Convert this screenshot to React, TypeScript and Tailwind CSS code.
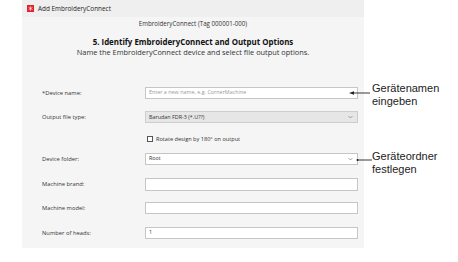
import React from 'react';

const ui = { fontFamily: '"Open Sans", "Noto Sans", sans-serif' };
const callout = { fontFamily: '"Liberation Sans", Arial, sans-serif' };

const Chevron: React.FC = () => (
  <svg width="5" height="4" viewBox="0 0 5 4" className="absolute right-[5px] top-1/2 -translate-y-1/2">
    <path d="M0.5 1 L2.5 3 L4.5 1" fill="none" stroke="#8a8a8a" strokeWidth="0.8" />
  </svg>
);

interface RowProps {
  label: string;
  className: string;
  children: React.ReactNode;
}

const Row: React.FC<RowProps> = ({ label, className, children }) => (
  <div className={`flex items-center ${className}`}>
    <div className="w-[103px] shrink-0 text-[5.8px] text-[#333]">{label}</div>
    <div className="relative w-[213px] h-full">{children}</div>
  </div>
);

const TextBox: React.FC<{ value?: string; placeholder?: string }> = ({ value, placeholder }) => (
  <div className="h-full w-full border border-[#c6c6c6] bg-white flex items-center pl-[3px] text-[5.4px] leading-none">
    {value ? <span className="text-[#333]">{value}</span> : <span className="text-[#9a9a9a]">{placeholder}</span>}
  </div>
);

const App: React.FC = () => {
  return (
    <div className="relative w-[458px] h-[262px] bg-white overflow-hidden" style={ui}>
      <div className="ml-[22px] w-[342px] h-[248px] bg-[#f5f5f5]">
        {/* title bar */}
        <div className="h-[17px] bg-[#efefef] flex items-center pl-[5px] gap-[4px]">
          <svg width="7" height="7" viewBox="0 0 7 7">
            <rect width="7" height="7" fill="#e0202e" />
            <path d="M3.5 1.2 V5.8 M1.5 2.3 L5.5 4.7 M1.5 4.7 L5.5 2.3" stroke="#fff" strokeWidth="0.6" />
          </svg>
          <span className="text-[6.4px] text-[#222]">Add EmbroideryConnect</span>
        </div>

        <div className="text-center mt-[2px] text-[6.2px] leading-[10px] text-[#333]">
          EmbroideryConnect (Tag 000001-000)
        </div>
        <div className="text-center mt-[8px] text-[7.9px] leading-[10px] font-bold text-[#111]">
          5. Identify EmbroideryConnect and Output Options
        </div>
        <div className="text-center text-[7.4px] leading-[10px] text-[#333]">
          Name the EmbroideryConnect device and select file output options.
        </div>

        <div className="mt-[30px] pl-[20px]">
          <Row label="*Device name:" className="h-[12px]">
            <TextBox placeholder="Enter a new name, e.g. CornerMachine" />
          </Row>
          <Row label="Output file type:" className="h-[12px] mt-[12px]">
            <div className="h-full w-full border border-[#cdcdcd] bg-[#e6e6e6] flex items-center pl-[3px] text-[5.4px] text-[#333]">
              Barudan FDR-3 (*.U??)
            </div>
            <Chevron />
          </Row>
          <Row label="" className="h-[12px] mt-[10px]">
            <div className="flex items-center h-full pl-[2px] gap-[3px]">
              <div className="w-[6px] h-[6px] border border-[#555] bg-white" />
              <span className="text-[5.6px] text-[#333]">Rotate design by 180° on output</span>
            </div>
          </Row>
          <Row label="Device folder:" className="h-[12px] mt-[8px]">
            <TextBox value="Root" />
            <Chevron />
          </Row>
          <Row label="Machine brand:" className="h-[13px] mt-[13px]">
            <TextBox />
          </Row>
          <Row label="Machine model:" className="h-[12px] mt-[11px]">
            <TextBox />
          </Row>
          <Row label="Number of heads:" className="h-[12px] mt-[13px]">
            <TextBox value="1" />
          </Row>
        </div>
      </div>

      {/* callouts */}
      <svg className="absolute left-0 top-0" width="458" height="262">
        <line x1="352" y1="93" x2="370" y2="93" stroke="#222" strokeWidth="0.9" />
        <path d="M349 93 L354 91.3 L354 94.7 Z" fill="#222" />
        <line x1="357" y1="160" x2="372" y2="160" stroke="#222" strokeWidth="0.9" />
        <circle cx="357.5" cy="160" r="1" fill="#222" />
      </svg>
      <div className="absolute left-[372px] top-[82px] text-[11px] leading-[13px] text-[#222]" style={callout}>
        Gerätenamen<br />eingeben
      </div>
      <div className="absolute left-[372px] top-[150px] text-[11px] leading-[13px] text-[#222]" style={callout}>
        Geräteordner<br />festlegen
      </div>
    </div>
  );
};

export default App;
